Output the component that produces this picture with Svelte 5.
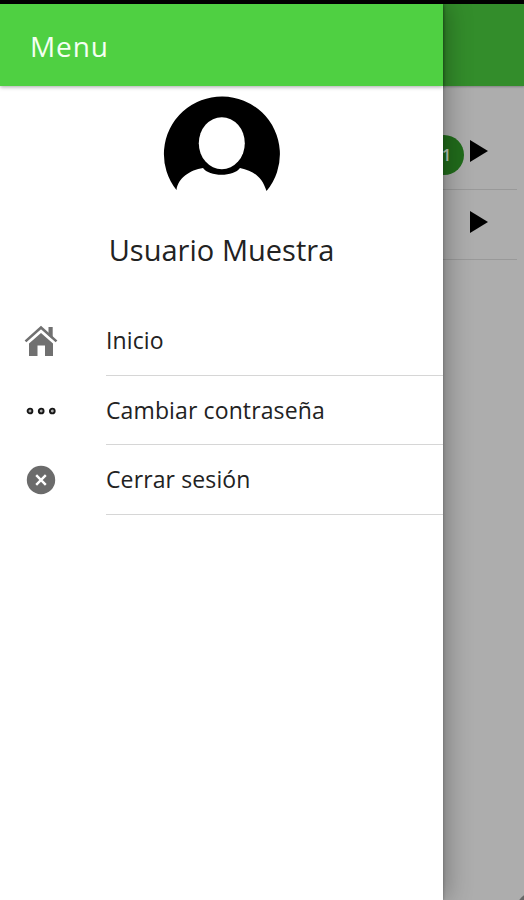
<script>
	const user = 'Usuario Muestra';

	const items = [
		{ icon: 'home', label: 'Inicio' },
		{ icon: 'dots', label: 'Cambiar contraseña' },
		{ icon: 'close', label: 'Cerrar sesión' }
	];

	let rows = [{ count: 1 }, { count: 0 }];
</script>

<div class="screen">
	<div class="status"></div>

	<div class="page">
		<header class="page-bar"></header>
		<ul class="rows">
			{#each rows as row}
				<li>
					{#if row.count}
						<span class="badge">{row.count}</span>
					{/if}
					<svg class="arrow" width="18" height="22" viewBox="0 0 18 22">
						<path d="M0 0L18 11L0 22Z" />
					</svg>
				</li>
			{/each}
		</ul>
		<span class="fab"></span>
	</div>

	<aside class="drawer">
		<header class="bar"><h1>Menu</h1></header>
		<div class="profile">
			<svg width="118" height="98" viewBox="0 0 118 98">
				<path
					d="M13.5 94A58 57.7 0 1 1 103.5 95C99 81 91 75 77 72C71 81 46 81 40 72C27 74 15 82 13.5 94Z"
				/>
				<ellipse cx="58.8" cy="47.2" rx="23" ry="26" fill="#fff" />
			</svg>
			<h2>{user}</h2>
		</div>
		<nav>
			{#each items as item}
				<div class="item">
					<span class="icon">
						{#if item.icon === 'home'}
							<svg width="34" height="34" viewBox="0 0 34 34" fill="#707070">
								<path d="M5 19.5L17 9L29 19.5V32H21V21.5H13.5V32H5Z" />
								<path d="M2 18L17 4.8L32 18" fill="none" stroke="#fff" stroke-width="4.4" />
								<path d="M24.5 3h4.2v12l-4.2-3.6z" />
								<path d="M3 19L17 6.6L31 19" fill="none" stroke="#fff" stroke-width="1" />
								<path d="M1.5 17.4L17 3.6L32.5 17.4" fill="none" stroke="#707070" stroke-width="2.6" />
							</svg>
						{:else if item.icon === 'dots'}
							<svg width="30" height="8" viewBox="0 0 30 8">
								<g fill="#aaa" stroke="#161616" stroke-width="1.9">
									<circle cx="4" cy="4" r="2.4" />
									<circle cx="15.2" cy="4" r="2.4" />
									<circle cx="26.3" cy="4" r="2.4" />
								</g>
							</svg>
						{:else}
							<svg width="30" height="30" viewBox="0 0 30 30">
								<circle cx="15" cy="15" r="14.2" fill="#6b6b6b" />
								<path d="M10.2 10.2L19.8 19.8M19.8 10.2L10.2 19.8" stroke="#fff" stroke-width="2.4" />
							</svg>
						{/if}
					</span>
					<span class="label">{item.label}</span>
				</div>
			{/each}
		</nav>
	</aside>
</div>

<style>
	:global(body) {
		margin: 0;
	}

	.screen {
		position: relative;
		height: 900px;
		overflow: hidden;
		font-family: 'Open Sans', 'Noto Sans', sans-serif;
		color: #222;
		background: #adadad;
	}

	.status {
		height: 4px;
		background: #000;
	}

	.page-bar {
		height: 82px;
		background: #338d2b;
		box-shadow: 0 1px 2px rgba(0, 0, 0, 0.25);
	}

	.rows {
		list-style: none;
		margin: 0;
		padding: 34px 7px 0 0;
	}

	.rows li {
		display: flex;
		align-items: center;
		justify-content: flex-end;
		gap: 6px;
		height: 69px;
		padding-right: 29px;
		border-bottom: 1px solid #999;
	}

	.arrow {
		margin-bottom: 8px;
	}

	.rows li + li .arrow {
		margin-bottom: 6px;
	}

	.badge {
		width: 40px;
		height: 40px;
		border-radius: 50%;
		background: #216c1b;
		color: #b9c9b7;
		font-size: 17px;
		font-weight: 600;
		line-height: 39px;
		text-align: center;
		text-indent: 5px;
	}

	.fab {
		position: absolute;
		left: 517px;
		top: 893px;
		width: 30px;
		height: 30px;
		border-radius: 50%;
		background: #666;
	}

	/* open side menu, over the dimmed page */
	.drawer {
		position: absolute;
		top: 4px;
		left: 0;
		bottom: 0;
		width: 443px;
		background: #fff;
		box-shadow: 0 0 3px rgba(0, 0, 0, 0.3), 4px 0 24px rgba(0, 0, 0, 0.3);
	}

	.bar {
		display: flex;
		align-items: center;
		height: 82px;
		padding-left: 30px;
		background: #4fd042;
		box-shadow: 0 1px 4px rgba(0, 0, 0, 0.35);
	}

	h1 {
		margin: 1px 0 0;
		font-size: 28px;
		font-weight: 400;
		letter-spacing: 0.9px;
		color: #f4fff2;
	}

	.profile {
		display: flex;
		flex-direction: column;
		align-items: center;
		height: 220px;
		padding-top: 10px;
		box-sizing: border-box;
	}

	h2 {
		margin: 35px 0 0;
		font-size: 29px;
		font-weight: 400;
		letter-spacing: 0.03px;
		line-height: 41px;
	}

	.item {
		display: flex;
		height: 69.7px;
	}

	.icon {
		display: flex;
		align-items: center;
		justify-content: center;
		width: 82px;
		margin-right: 24px;
	}

	.label {
		flex: 1;
		border-bottom: 1px solid #d6d6d6;
		font-size: 23px;
		letter-spacing: 0.12px;
		line-height: 69px;
	}
</style>
